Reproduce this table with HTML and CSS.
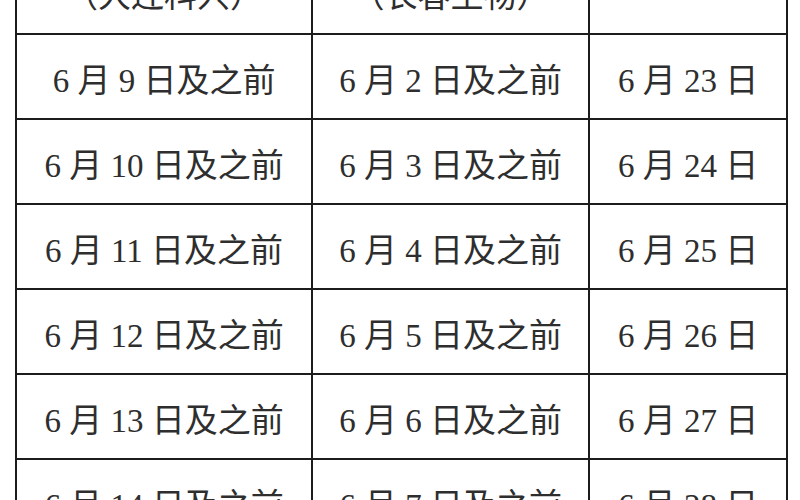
FILE: index.html
```html
<!DOCTYPE html>
<html lang="zh-CN">
<head>
<meta charset="utf-8">
<title>接种时间表</title>
<link rel="stylesheet" href="styles.css">
</head>
<body>
<table class="schedule">
  <colgroup>
    <col class="c1"><col class="c2"><col class="c3">
  </colgroup>
  <tr class="head">
    <td>（大连科兴）</td>
    <td>（长春生物）</td>
    <td></td>
  </tr>
  <tr><td>6 月 9 日及之前</td><td>6 月 2 日及之前</td><td>6 月 23 日</td></tr>
  <tr><td>6 月 10 日及之前</td><td>6 月 3 日及之前</td><td>6 月 24 日</td></tr>
  <tr><td>6 月 11 日及之前</td><td>6 月 4 日及之前</td><td>6 月 25 日</td></tr>
  <tr><td>6 月 12 日及之前</td><td>6 月 5 日及之前</td><td>6 月 26 日</td></tr>
  <tr><td>6 月 13 日及之前</td><td>6 月 6 日及之前</td><td>6 月 27 日</td></tr>
  <tr><td>6 月 14 日及之前</td><td>6 月 7 日及之前</td><td>6 月 28 日</td></tr>
</table>
</body>
</html>
```
FILE: styles.css
```css
html, body {
  margin: 0;
  padding: 0;
  background: #ffffff;
  overflow: hidden;
}
body {
  width: 800px;
  height: 500px;
}
.schedule {
  border-collapse: collapse;
  table-layout: fixed;
  width: 771px;
  margin: -52px 0 0 15px;
  font-family: "Liberation Serif", "Noto Sans CJK SC", serif;
  font-size: 33px;
  color: #2e2e2e;
}
.c1 { width: 296px; }
.c2 { width: 277px; }
.c3 { width: 198px; }
.schedule td {
  border: 2px solid #1c1c1c;
  height: 85px;
  padding: 9px 0 0 0;
  text-align: center;
  vertical-align: middle;
  white-space: nowrap;
  line-height: 1;
  box-sizing: border-box;
}
```
